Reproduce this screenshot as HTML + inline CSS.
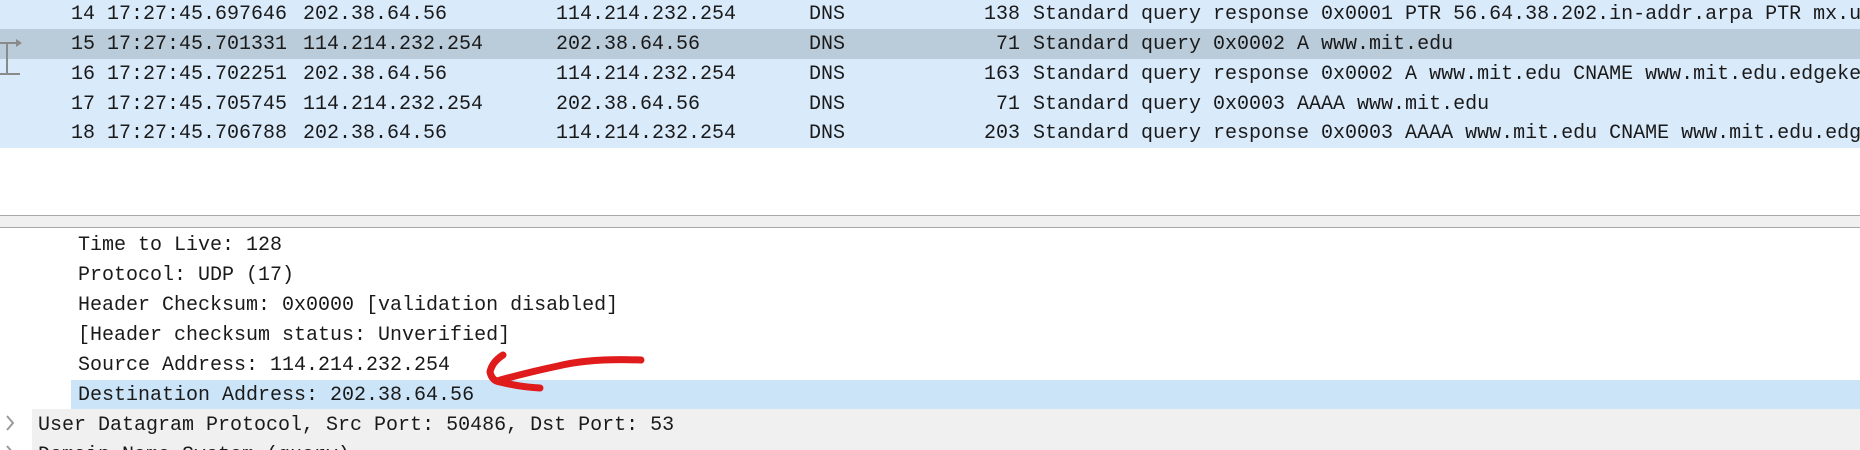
<!DOCTYPE html>
<html><head><meta charset="utf-8"><style>
html,body{margin:0;padding:0;width:1860px;height:450px;overflow:hidden;background:#fff;position:relative;font-family:"Liberation Mono",monospace;font-size:20px;color:#1a1a1a}
.r{position:absolute;left:0;width:1860px;height:30px;line-height:30px;white-space:pre;overflow:hidden}
.r span{position:absolute;top:0}
.t{position:absolute;white-space:pre;line-height:30px;height:30px}
</style></head><body>
<div style="position:absolute;left:0;top:0;width:1860px;height:148px;background:#d9eafb"></div>
<div style="position:absolute;left:0;top:29px;width:1860px;height:30px;background:#bacbda"></div>

<div class="r" style="top:0px"><span style="left:71px">14 17:27:45.697646</span><span style="left:303px">202.38.64.56</span><span style="left:556px">114.214.232.254</span><span style="left:809px">DNS</span><span style="left:984px">138</span><span style="left:1033px">Standard query response 0x0001 PTR 56.64.38.202.in-addr.arpa PTR mx.ustc</span></div>
<div class="r" style="top:30px"><span style="left:71px">15 17:27:45.701331</span><span style="left:303px">114.214.232.254</span><span style="left:556px">202.38.64.56</span><span style="left:809px">DNS</span><span style="left:996px">71</span><span style="left:1033px">Standard query 0x0002 A www.mit.edu</span></div>
<div class="r" style="top:60px"><span style="left:71px">16 17:27:45.702251</span><span style="left:303px">202.38.64.56</span><span style="left:556px">114.214.232.254</span><span style="left:809px">DNS</span><span style="left:984px">163</span><span style="left:1033px">Standard query response 0x0002 A www.mit.edu CNAME www.mit.edu.edgekey.net</span></div>
<div class="r" style="top:90px"><span style="left:71px">17 17:27:45.705745</span><span style="left:303px">114.214.232.254</span><span style="left:556px">202.38.64.56</span><span style="left:809px">DNS</span><span style="left:996px">71</span><span style="left:1033px">Standard query 0x0003 AAAA www.mit.edu</span></div>
<div class="r" style="top:119px;height:29px"><span style="left:71px">18 17:27:45.706788</span><span style="left:303px">202.38.64.56</span><span style="left:556px">114.214.232.254</span><span style="left:809px">DNS</span><span style="left:984px">203</span><span style="left:1033px">Standard query response 0x0003 AAAA www.mit.edu CNAME www.mit.edu.edgekey.net</span></div>

<svg style="position:absolute;left:0;top:0" width="30" height="80"><g stroke="#8a8a8a" stroke-width="2" fill="none"><path d="M0 43H18M7 43V74M0 74H20"/></g><path d="M16 39L22 43L16 47Z" fill="#8a8a8a"/></svg>

<div style="position:absolute;left:0;top:215px;width:1860px;height:1px;background:#a8a8a8"></div>
<div style="position:absolute;left:0;top:216px;width:1860px;height:11px;background:#f0f0f0"></div>
<div style="position:absolute;left:0;top:227px;width:1860px;height:1px;background:#a8a8a8"></div>

<div style="position:absolute;left:71px;top:380px;width:1789px;height:29px;background:#cce4f7"></div>
<div style="position:absolute;left:32px;top:409px;width:1828px;height:41px;background:#f0f0f0"></div>

<div class="t" style="left:78px;top:231px">Time to Live: 128</div>
<div class="t" style="left:78px;top:261px">Protocol: UDP (17)</div>
<div class="t" style="left:78px;top:291px">Header Checksum: 0x0000 [validation disabled]</div>
<div class="t" style="left:78px;top:321px">[Header checksum status: Unverified]</div>
<div class="t" style="left:78px;top:351px">Source Address: 114.214.232.254</div>
<div class="t" style="left:78px;top:381px">Destination Address: 202.38.64.56</div>
<div class="t" style="left:38px;top:411px">User Datagram Protocol, Src Port: 50486, Dst Port: 53</div>
<div class="t" style="left:38px;top:441px">Domain Name System (query)</div>

<svg style="position:absolute;left:0;top:400px" width="30" height="50"><path d="M7 16L13 23L7 30" stroke="#9a9a9a" stroke-width="2" fill="none"/><path d="M7 46L13 53" stroke="#9a9a9a" stroke-width="2" fill="none"/></svg>

<svg style="position:absolute;left:0;top:0" width="1860" height="450"><g stroke="#e01b1b" stroke-width="7" fill="none" stroke-linecap="round" stroke-linejoin="round"><path d="M641 360Q590 358 558 366Q525 373 497 381"/><path d="M503 355Q492 362 490 372Q492 381 500 382Q520 387 540 388"/></g></svg>
</body></html>
